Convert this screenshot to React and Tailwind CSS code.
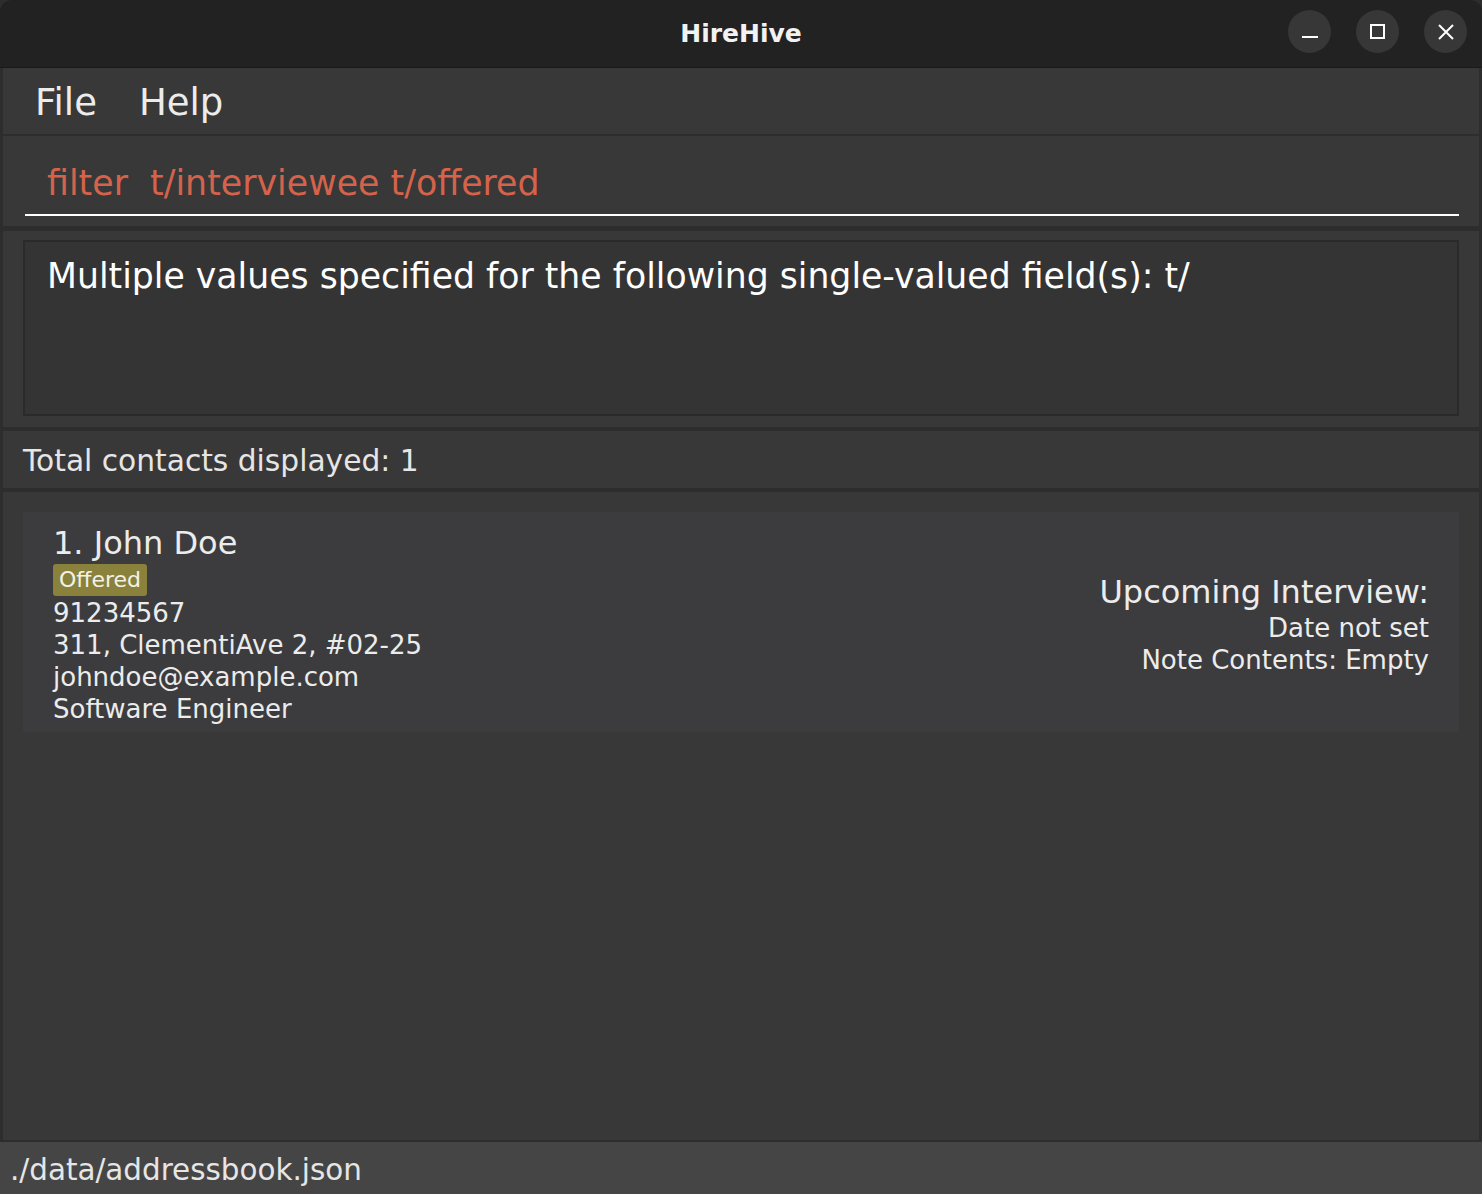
import React from "react";

const font = { fontFamily: '"DejaVu Sans", "Noto Sans", sans-serif' };

function CircleBtn({ children }) {
  return (
    <div className="w-[43px] h-[43px] rounded-full bg-[#373737] flex items-center justify-center">
      {children}
    </div>
  );
}

export default function App() {
  return (
    <div className="w-[1482px] h-[1194px] bg-[#2d2d2d] flex flex-col overflow-hidden" style={font}>
      {/* title bar */}
      <div className="h-[68px] bg-[#222222] rounded-t-[12px] flex items-center relative border-b border-[#1a1a1a] shrink-0">
        <div className="flex-1 text-center text-[25px] font-bold text-[#f2f2f2]">HireHive</div>
        <div className="absolute right-[15px] top-[10px] flex gap-[25px]">
          <CircleBtn>
            <div className="w-[16px] h-[2px] bg-white mt-[10px]" />
          </CircleBtn>
          <CircleBtn>
            <div className="w-[15px] h-[15px] border-2 border-white" />
          </CircleBtn>
          <CircleBtn>
            <svg width="18" height="18" viewBox="0 0 18 18">
              <path d="M2 2L16 16M16 2L2 16" stroke="white" strokeWidth="2" />
            </svg>
          </CircleBtn>
        </div>
      </div>

      <div className="flex-1 flex flex-col pl-[3px] pr-[3px]">
        {/* menu */}
        <div className="h-[66px] bg-[#383838] flex items-center gap-[42px] pl-[32px] pt-[4px] text-[37px] text-[#ececec] shrink-0">
          <span>File</span>
          <span>Help</span>
        </div>
        <div className="h-[2px] shrink-0" />
        {/* command */}
        <div className="h-[90px] bg-[#383838] shrink-0 pl-[22px] pr-[20px] flex flex-col">
          <div className="h-[30px]" />
          <div className="text-[34.8px] text-[#d5634b] pl-[22px] leading-[34px] whitespace-pre">filter  t/interviewee t/offered</div>
          <div className="h-[14px]" />
          <div className="h-[2px] bg-white" />
        </div>
        <div className="h-[5px] shrink-0" />
        {/* result */}
        <div className="h-[196px] bg-[#383838] shrink-0 px-[20px] pt-[9px]">
          <div className="h-[176px] border-2 border-[#2a2a2a] bg-[#343434] px-[22px] pt-[12px]">
            <div className="text-[34.7px] text-white leading-[44px]">
              Multiple values specified for the following single-valued field(s): t/
            </div>
          </div>
        </div>
        <div className="h-[4px] shrink-0" />
        {/* status */}
        <div className="h-[57px] bg-[#383838] shrink-0 flex items-center pl-[20px] pt-[3px] text-[29.7px] text-[#e6e6e6]">
          Total contacts displayed: 1
        </div>
        <div className="h-[4px] shrink-0" />
        {/* list */}
        <div className="flex-1 bg-[#383838] px-[20px] pt-[20px]">
          <div className="h-[220px] bg-[#3c3c3e] flex justify-between pl-[30px] pr-[30px] text-[#ececec]">
            <div className="flex flex-col pt-[12px]">
              <div className="text-[32px] leading-[38px]">1. John Doe</div>
              <div className="flex mt-[2px] mb-[1px]">
                <span className="bg-[#8a823c] text-[#f2f2e6] text-[22px] leading-[32px] px-[6px] rounded-[3px]">Offered</span>
              </div>
              <div className="text-[26px] leading-[32px]">91234567</div>
              <div className="text-[26px] leading-[32px]">311, ClementiAve 2, #02-25</div>
              <div className="text-[26px] leading-[32px]">johndoe@example.com</div>
              <div className="text-[26px] leading-[32px]">Software Engineer</div>
            </div>
            <div className="flex flex-col items-end pt-[60px]">
              <div className="text-[32px] leading-[40px]">Upcoming Interview:</div>
              <div className="text-[26px] leading-[32px]">Date not set</div>
              <div className="text-[26px] leading-[32px]">Note Contents: Empty</div>
            </div>
          </div>
        </div>
      </div>
      <div className="h-[2px] shrink-0 bg-[#2d2d2d]" />
      {/* footer */}
      <div className="h-[52px] bg-[#454545] shrink-0 flex items-center pl-[10px] pt-[4px] text-[29.4px] text-[#e6e6e6]">
        ./data/addressbook.json
      </div>
    </div>
  );
}
